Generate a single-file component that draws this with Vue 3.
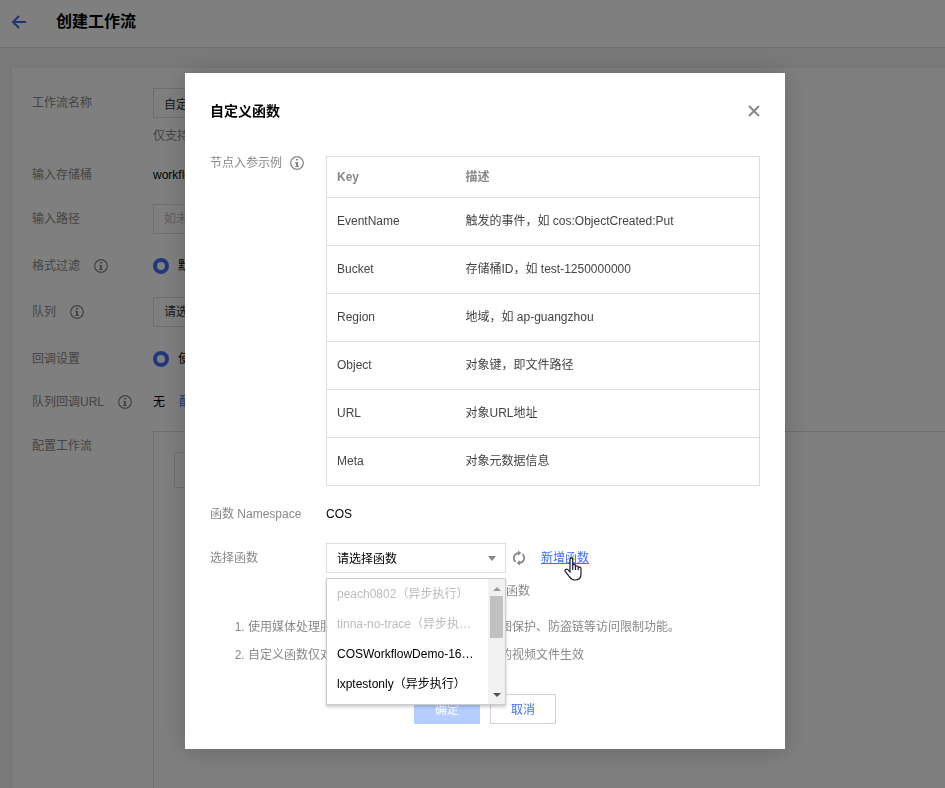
<template>
  <div class="page">
    <header class="header">
      <a class="back" href="#" aria-label="返回">
        <svg width="16" height="16" viewBox="0 0 16 16">
          <path d="M15 8H2M8 2L2 8l6 6" />
        </svg>
      </a>
      <h1>创建工作流</h1>
    </header>

    <main class="card">
      <div class="row">
        <label class="label tall" for="flowName">工作流名称</label>
        <div class="field">
          <input id="flowName" v-model="flowName" class="input" type="text">
          <p class="hint">仅支持中文、英文、数字、下划线和短横线</p>
        </div>
      </div>
      <div class="row text-row">
        <span class="label">输入存储桶</span>
        <span>workflow-1250000000</span>
      </div>
      <div class="row">
        <label class="label tall" for="flowPath">输入路径</label>
        <div class="field">
          <input id="flowPath" class="input" type="text" placeholder="如未填写则对所有路径生效">
        </div>
      </div>
      <div class="row mid-row">
        <span class="label">格式过滤
          <svg class="info" width="14" height="14" viewBox="0 0 14 14"><use href="#icon-info" /></svg>
        </span>
        <label class="radio"><input type="radio" name="format" checked>默认视频格式</label>
      </div>
      <div class="row">
        <label class="label tall" for="queue">队列
          <svg class="info" width="14" height="14" viewBox="0 0 14 14"><use href="#icon-info" /></svg>
        </label>
        <div class="field">
          <select id="queue" class="input">
            <option>请选择队列</option>
          </select>
        </div>
      </div>
      <div class="row mid-row">
        <span class="label">回调设置</span>
        <label class="radio"><input type="radio" name="callback" checked>使用队列回调</label>
      </div>
      <div class="row mid-row">
        <span class="label">队列回调URL
          <svg class="info" width="14" height="14" viewBox="0 0 14 14"><use href="#icon-info" /></svg>
        </span>
        <span>无<a class="config" href="#">配置</a></span>
      </div>
      <div class="row">
        <span class="label tall">配置工作流</span>
        <div class="canvas">
          <div class="node"></div>
        </div>
      </div>
    </main>

    <div class="mask">
      <section class="dialog" role="dialog" aria-labelledby="dialogTitle">
        <div class="dialog-head">
          <h2 id="dialogTitle">自定义函数</h2>
          <button class="close" type="button" aria-label="关闭">
            <svg width="12" height="12" viewBox="0 0 12 12"><path d="M1 1l10 10M11 1L1 11" /></svg>
          </button>
        </div>

        <div class="item">
          <span class="name short">节点入参示例
            <svg class="info" width="14" height="14" viewBox="0 0 14 14"><use href="#icon-info" /></svg>
          </span>
          <table class="params">
            <thead>
              <tr>
                <th class="key">Key</th>
                <th>描述</th>
              </tr>
            </thead>
            <tbody>
              <tr v-for="param in params" :key="param.key">
                <td>{{ param.key }}</td>
                <td>{{ param.desc }}</td>
              </tr>
            </tbody>
          </table>
        </div>

        <div class="item namespace">
          <span class="name">函数 Namespace</span>
          <span>COS</span>
        </div>

        <div class="item">
          <label class="name tall" for="func">选择函数</label>
          <div class="picker">
            <div class="picker-line">
              <div class="select-box">
                <select id="func" v-model="selected">
                  <option value="">请选择函数</option>
                  <option v-for="fn in functions" :key="fn.name" :value="fn.name" :disabled="fn.disabled">{{ fn.name }}</option>
                </select>
                <div class="dropdown">
                  <ul class="options">
                    <li v-for="fn in functions" :key="fn.name" :class="{ disabled: fn.disabled }" @click="choose(fn)">{{ fn.name }}</li>
                  </ul>
                  <div class="scrollbar">
                    <span class="arrow up"></span>
                    <span class="thumb"></span>
                    <span class="arrow down"></span>
                  </div>
                </div>
              </div>
              <button class="refresh" type="button" aria-label="刷新">
                <svg width="14" height="16" viewBox="0 0 14 16">
                  <path class="line" d="M3.600 11.900A5 5 0 0 1 6.500 3.100M10.400 4.100A5 5 0 0 1 7.500 12.900" />
                  <path class="tip" d="M6 .6L9.300 3.100L6 5.700zM8 15.400L4.700 12.900L8 10.300z" />
                </svg>
              </button>
              <a class="add" href="#">新增函数
                <svg class="pointer" width="18" height="24" viewBox="0 0 18 24">
                  <path d="M6 14V2.600C6 .5 8.700 .5 8.700 2.600V9.500V8.500C9 7 11.500 7 11.500 8.800V10C11.700 8.300 14.200 8.400 14.200 10V11C14.300 9.800 17 9.900 17 11.500V17C17 21 14.500 23 11.200 23C8.500 23 7 22 5.500 19.800L1.200 14.300C.3 12.800 2.300 11.300 3.700 12.600L6 14.800z" />
                  <path d="M8.700 9v4M11.500 10v3M14.200 11v2" />
                </svg>
              </a>
            </div>
            <p class="hint">仅支持选择与存储桶处同一地域的函数</p>
          </div>
        </div>

        <ol class="notes">
          <li>使用媒体处理服务功能时，存储桶不可以开启原图保护、防盗链等访问限制功能。</li>
          <li>自定义函数仅对工作流输入存储桶和路径中上传的视频文件生效</li>
        </ol>

        <div class="actions">
          <button class="btn primary" type="button" disabled>确定</button>
          <button class="btn" type="button">取消</button>
        </div>
      </section>
    </div>

    <svg class="sprite" width="0" height="0">
      <symbol id="icon-info" viewBox="0 0 14 14">
        <circle cx="7" cy="7" r="6.3" fill="none" stroke="currentColor" stroke-width="1.3" />
        <path d="M6 3h2v1.500H6zM5 6h3v4h1v1H5v-1h1V7H5z" fill="currentColor" />
      </symbol>
    </svg>
  </div>
</template>

<script setup>
import { ref } from 'vue';

const flowName = ref('自定义函数工作流');
const selected = ref('');

const params = [
  { key: 'EventName', desc: '触发的事件，如 cos:ObjectCreated:Put' },
  { key: 'Bucket', desc: '存储桶ID，如 test-1250000000' },
  { key: 'Region', desc: '地域，如 ap-guangzhou' },
  { key: 'Object', desc: '对象键，即文件路径' },
  { key: 'URL', desc: '对象URL地址' },
  { key: 'Meta', desc: '对象元数据信息' },
];

const functions = [
  { name: 'peach0802（异步执行）', disabled: true },
  { name: 'tinna-no-trace（异步执行）', disabled: true },
  { name: 'COSWorkflowDemo-1627890000（异步执行）', disabled: false },
  { name: 'lxptestonly（异步执行）', disabled: false },
];

const choose = (fn) => {
  if (!fn.disabled) {
    selected.value = fn.name;
  }
};
</script>

<style>
body {
  margin: 0;
}
</style>

<style scoped>
* {
  box-sizing: border-box;
}

.page {
  background: #f2f2f2;
  color: #000;
  display: flex;
  flex-direction: column;
  font-family: "Liberation Sans", "Noto Sans CJK SC", sans-serif;
  font-size: 12px;
  height: 100vh;
  line-height: 20px;
  overflow: hidden;
}

.page button,
.page input,
.page select {
  font: inherit;
}

h1,
h2,
p {
  margin: 0;
}

a {
  color: #3d6eff;
  text-decoration: none;
}

.header {
  align-items: center;
  background: #fff;
  border-bottom: 1px solid #ddd;
  display: flex;
  flex: none;
  gap: 29px;
  height: 48px;
  padding: 0 11px 4px;
}

.header h1 {
  font-size: 16px;
  line-height: 24px;
}

.back {
  display: flex;
}

.back svg {
  fill: none;
  stroke: #4068f0;
  stroke-width: 2;
}

.card {
  background: #fff;
  box-shadow: 0 1px 3px rgba(0, 0, 0, 0.15);
  display: flex;
  flex: 1;
  flex-direction: column;
  gap: 20px;
  margin: 20px 0 0 12px;
  padding: 20px 0 0 20px;
}

.row {
  align-items: flex-start;
  display: flex;
}

.row:last-child {
  flex: 1;
  margin-top: -2px;
}

.text-row {
  line-height: 18px;
}

.mid-row {
  align-items: center;
  height: 23px;
}

.label {
  align-items: center;
  color: #888;
  display: flex;
  flex: none;
  gap: 14px;
  width: 121px;
}

.tall {
  line-height: 30px;
}

.info {
  color: #888;
}

.input {
  appearance: none;
  background: #fff;
  border: 1px solid #ddd;
  border-radius: 0;
  color: #333;
  display: block;
  height: 30px;
  padding: 0 10px;
  width: 200px;
}

.input::placeholder {
  color: #bbb;
}

.hint {
  color: #888;
  padding-top: 8px;
}

.radio {
  align-items: center;
  display: flex;
  gap: 9px;
}

.radio input {
  appearance: none;
  border: 4px solid #4070f8;
  border-radius: 50%;
  height: 16px;
  margin: 0;
  width: 16px;
}

.config {
  margin-left: 14px;
}

.canvas {
  align-self: stretch;
  border: 1px solid #ddd;
  border-width: 1px 0 0 1px;
  flex: 1;
  padding: 20px;
}

.node {
  border: 1px solid #ddd;
  height: 36px;
  width: 120px;
}

.mask {
  align-items: flex-start;
  background: rgba(0, 0, 0, 0.5);
  display: flex;
  inset: 0;
  justify-content: center;
  overflow: hidden;
  padding: 73px 0 0 25px;
  position: fixed;
}

.dialog {
  background: #fff;
  box-shadow: 0 2px 24px rgba(0, 0, 0, 0.2);
  padding: 25px;
  width: 600px;
}

.dialog-head {
  align-items: center;
  display: flex;
  height: 26px;
  justify-content: space-between;
  margin-bottom: 32px;
}

.dialog-head h2 {
  font-size: 14px;
}

.close,
.refresh {
  background: none;
  border: 0;
  display: flex;
  padding: 0;
}

.close svg {
  fill: none;
  stroke: #888;
  stroke-width: 2;
}

.item {
  display: flex;
}

.name {
  align-items: center;
  align-self: flex-start;
  color: #888;
  display: flex;
  flex: none;
  gap: 8px;
  width: 116px;
}

.short {
  line-height: 14px;
}

.params {
  border: 1px solid #ddd;
  border-collapse: collapse;
  color: #444;
  flex: 1;
  table-layout: fixed;
  width: 100%;
}

.params th,
.params td {
  border-bottom: 1px solid #ddd;
  height: 48px;
  padding: 0 10px 2px;
  text-align: left;
}

.params th {
  color: #888;
  height: 41px;
  padding-bottom: 0;
}

.params .key {
  width: 129px;
}

.namespace {
  padding: 18px 0 19px;
}

.picker {
  flex: 1;
}

.picker-line {
  align-items: center;
  display: flex;
}

.select-box {
  position: relative;
  width: 180px;
}

.select-box select {
  appearance: none;
  background: #fff;
  border: 1px solid #ddd;
  border-radius: 0;
  color: #000;
  display: block;
  height: 30px;
  padding: 2px 10px 0;
  width: 100%;
}

.select-box::after {
  border: 4px solid transparent;
  border-bottom: 0;
  border-top: 5px solid #888;
  content: "";
  position: absolute;
  right: 10px;
  top: 13px;
}

.dropdown {
  background: #fff;
  border: 1px solid #ccc;
  box-shadow: 0 2px 3px rgba(0, 0, 0, 0.2);
  display: flex;
  height: 127px;
  left: 0;
  position: absolute;
  right: 0;
  top: 35px;
  z-index: 1;
}

.options {
  flex: 1;
  line-height: 30px;
  list-style: none;
  margin: 0;
  min-width: 0;
  padding: 0;
}

.options li {
  overflow: hidden;
  padding: 0 10px;
  text-overflow: ellipsis;
  white-space: nowrap;
}

.options .disabled {
  color: #bbb;
}

.scrollbar {
  align-items: center;
  background: #f1f1f1;
  display: flex;
  flex-direction: column;
  width: 17px;
}

.thumb {
  background: #c1c1c1;
  height: 42px;
  margin-top: 5px;
  width: 13px;
}

.arrow {
  border: 4px solid transparent;
}

.up {
  border-bottom-color: #999;
  border-top: 0;
  margin-top: 8px;
}

.down {
  border-bottom: 0;
  border-top-color: #505050;
  margin: auto 0 7px;
}

.refresh {
  margin-left: 6px;
}

.refresh .line {
  fill: none;
  stroke: #888;
  stroke-width: 1.8;
}

.refresh .tip {
  fill: #888;
}

.add {
  margin-left: 15px;
  position: relative;
  text-decoration: underline;
}

.pointer {
  fill: #fff;
  left: 23px;
  position: absolute;
  stroke: #1c1c30;
  stroke-width: 1.2;
  top: 9px;
}

.notes {
  color: #888;
  line-height: 28px;
  margin: 0;
  padding: 12px 0 25px 38px;
}

.actions {
  display: flex;
  gap: 10px;
  justify-content: center;
}

.btn {
  background: #fff;
  border: 1px solid #cfd0e0;
  color: #3d6eff;
  height: 30px;
  padding: 2px 0 0;
  width: 66px;
}

.primary {
  background: #b6ceff;
  border-color: #b6ceff;
  color: #fff;
}

.sprite {
  position: absolute;
}
</style>
